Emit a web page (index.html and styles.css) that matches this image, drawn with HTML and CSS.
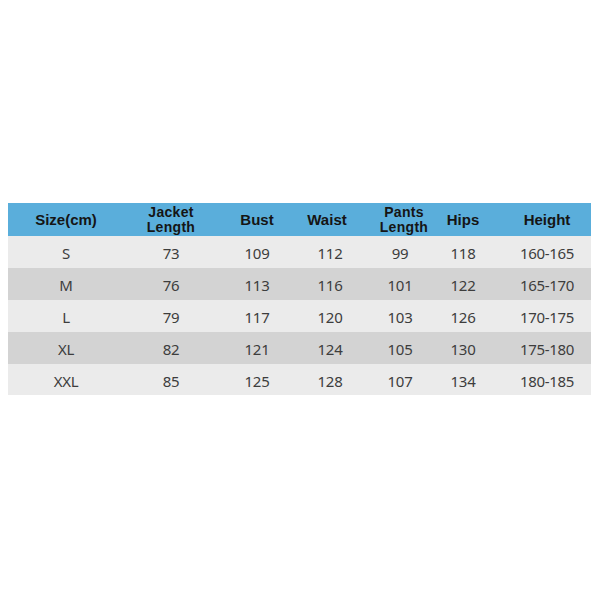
FILE: index.html
```html
<!DOCTYPE html>
<html>
<head>
<meta charset="utf-8">
<link rel="stylesheet" href="styles.css">
</head>
<body>
<div class="page">
  <div class="table">
    <div class="row head">
      <div class="cell">Size(cm)</div>
      <div class="cell two">Jacket<br>Length</div>
      <div class="cell">Bust</div>
      <div class="cell waist">Waist</div>
      <div class="cell two pants">Pants<br>Length</div>
      <div class="cell">Hips</div>
      <div class="cell">Height</div>
    </div>
    <div class="row light">
      <div class="cell">S</div><div class="cell">73</div><div class="cell">109</div><div class="cell">112</div><div class="cell">99</div><div class="cell">118</div><div class="cell">160-165</div>
    </div>
    <div class="row dark">
      <div class="cell">M</div><div class="cell">76</div><div class="cell">113</div><div class="cell">116</div><div class="cell">101</div><div class="cell">122</div><div class="cell">165-170</div>
    </div>
    <div class="row light">
      <div class="cell">L</div><div class="cell">79</div><div class="cell">117</div><div class="cell">120</div><div class="cell">103</div><div class="cell">126</div><div class="cell">170-175</div>
    </div>
    <div class="row dark">
      <div class="cell">XL</div><div class="cell">82</div><div class="cell">121</div><div class="cell">124</div><div class="cell">105</div><div class="cell">130</div><div class="cell">175-180</div>
    </div>
    <div class="row light last">
      <div class="cell">XXL</div><div class="cell">85</div><div class="cell">125</div><div class="cell">128</div><div class="cell">107</div><div class="cell">134</div><div class="cell">180-185</div>
    </div>
  </div>
</div>
</body>
</html>
```
FILE: styles.css
```css
html, body {
  margin: 0;
  padding: 0;
  background: #ffffff;
}
.page {
  width: 600px;
  height: 600px;
  padding-top: 203px;
  padding-left: 8px;
  box-sizing: border-box;
}
.table {
  width: 583px;
}
.row {
  display: grid;
  grid-template-columns: 116px 94px 78px 68px 72px 54px 101px;
  height: 32px;
  align-items: center;
}
.row .cell {
  text-align: center;
}
.row .cell:last-child {
  padding-left: 13px;
}
.head {
  height: 33px;
  background: #5aaedb;
  font-family: "Liberation Sans", Arial, sans-serif;
  font-weight: bold;
  font-size: 15px;
  line-height: 17px;
  color: #151515;
}
.head .two {
  font-size: 14px;
  line-height: 15px;
  letter-spacing: 0.3px;
}
.head .waist {
  padding-right: 6px;
}
.head .pants {
  padding-left: 8px;
}
.light, .dark {
  font-family: "Noto Sans", sans-serif;
  font-size: 15px;
  letter-spacing: -0.3px;
  color: #3d3d3d;
  padding-top: 2px;
  box-sizing: border-box;
}
.light { background: #ebebeb; }
.dark { background: #d3d3d3; }
.last { height: 31px; }
```
